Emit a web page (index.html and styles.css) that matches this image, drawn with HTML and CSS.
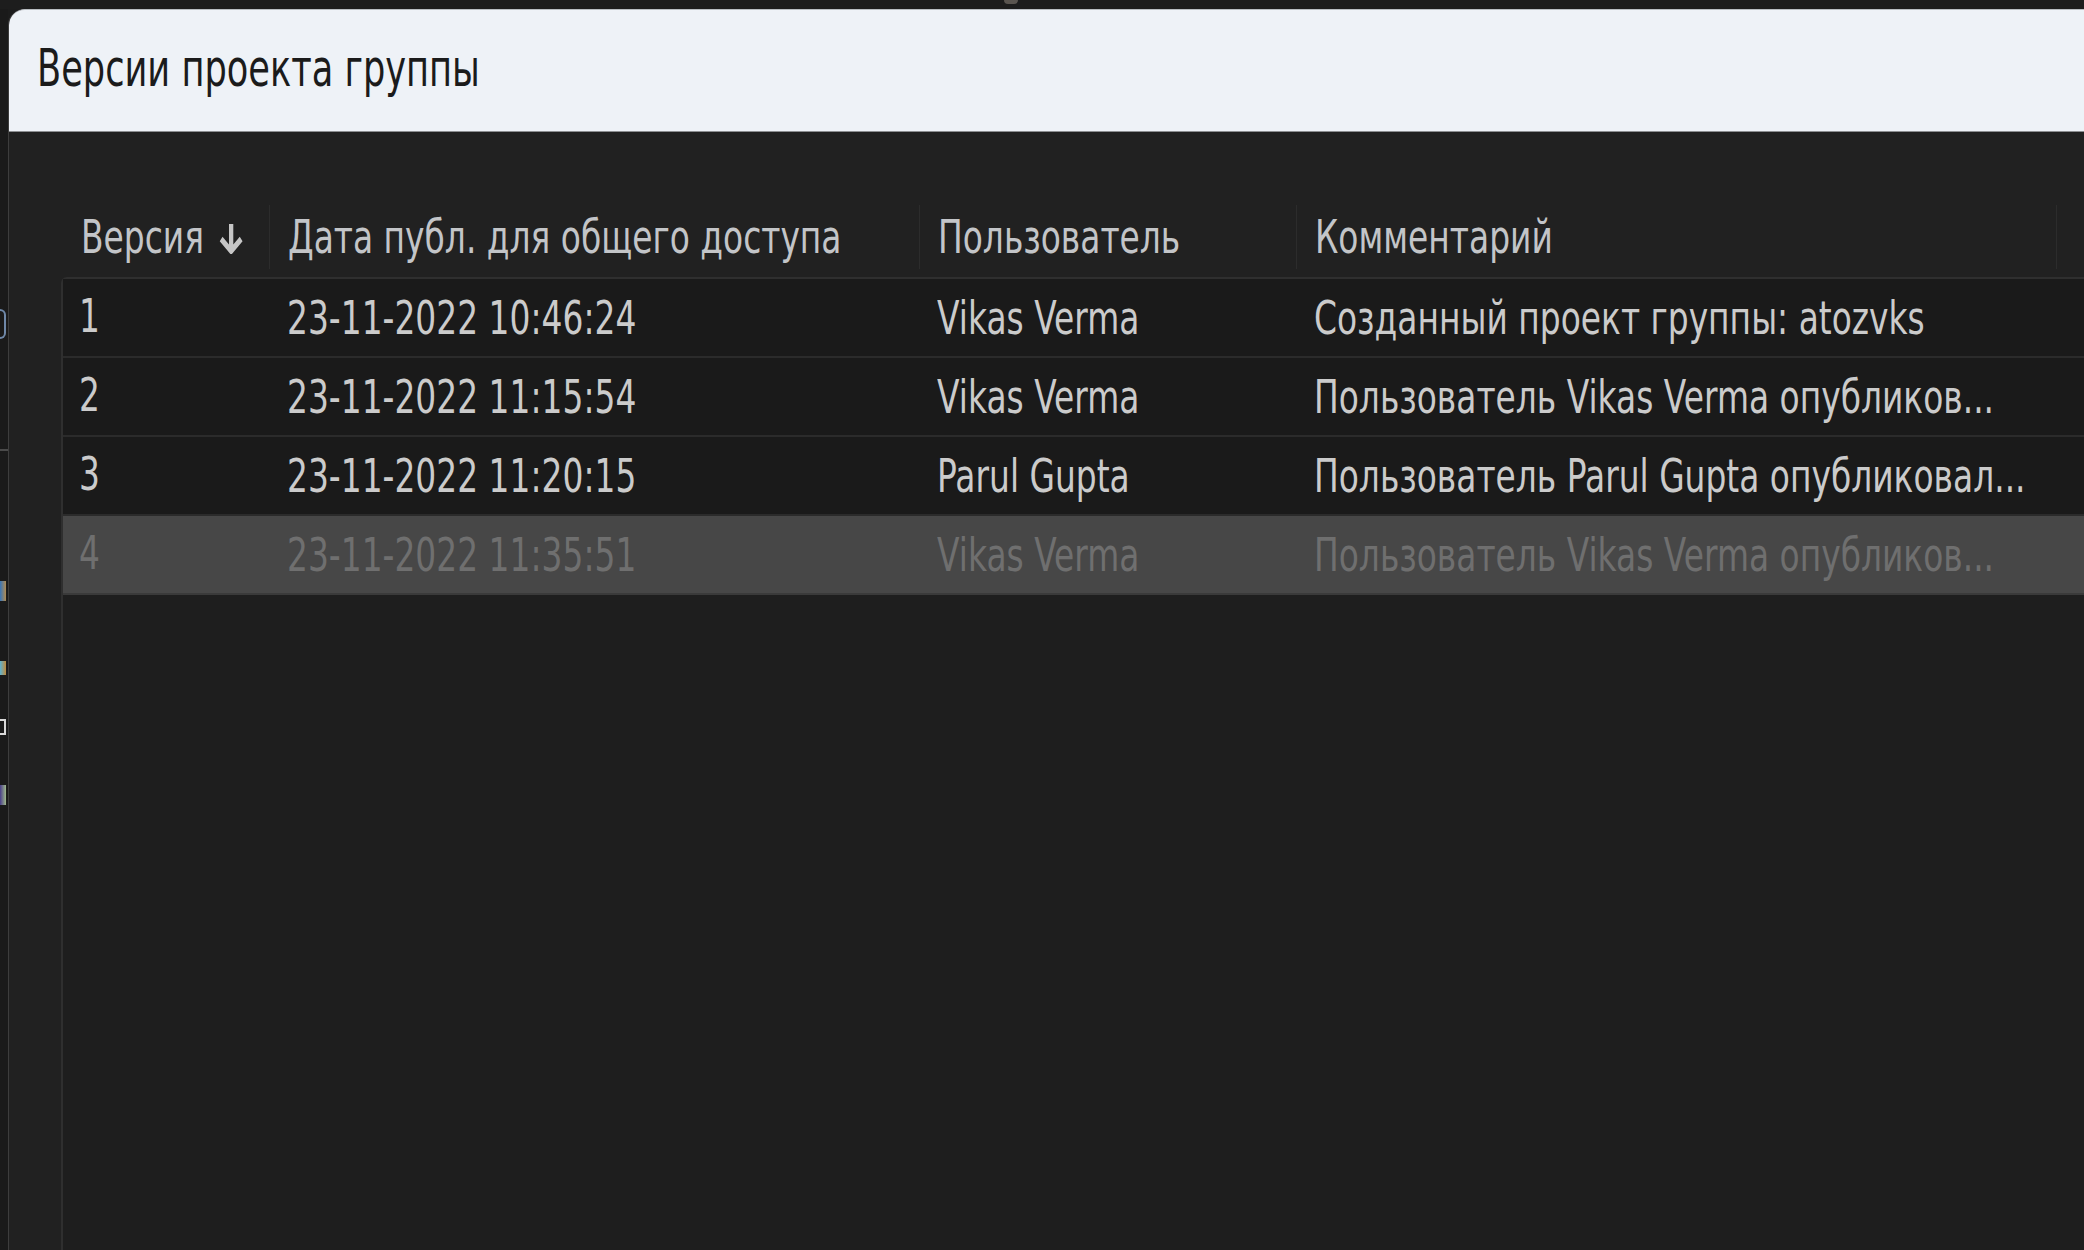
FILE: index.html
```html
<!DOCTYPE html>
<html lang="ru">
<head>
    <meta charset="UTF-8">
    <meta name="viewport" content="width=device-width, initial-scale=1.0">
    <title>Версии проекта группы</title>
    <link rel="stylesheet" href="styles.css">
</head>
<body>
    <div class="topstrip"><span class="blip"></span></div>
    <div class="desktop">
        <div class="backdrop">
            <span class="bit ring"></span>
            <span class="bit line"></span>
            <span class="bit blue"></span>
            <span class="bit orange"></span>
            <span class="bit white"></span>
            <span class="bit green"></span>
        </div>
        <div class="dialog">
            <div class="titlebar">
                <span class="title">Версии проекта группы</span>
            </div>
            <div class="content">
                <div class="head">
                    <div class="hcell first"><span class="t">Версия<svg class="sort" viewBox="0 0 36 32" width="36" height="32"><path d="M18 2 V28 M4 17 L18 29 L32 17" fill="none" stroke="#c6c6c6" stroke-width="6"/></svg></span></div>
                    <div class="hcell"><span class="t">Дата публ. для общего доступа</span></div>
                    <div class="hcell"><span class="t">Пользователь</span></div>
                    <div class="hcell"><span class="t">Комментарий</span></div>
                    <div class="hcell"></div>
                </div>
                <div class="grid">
                    <div class="row">
                        <div class="cell first"><span class="t">1</span></div>
                        <div class="cell"><span class="t">23-11-2022 10:46:24</span></div>
                        <div class="cell"><span class="t">Vikas Verma</span></div>
                        <div class="cell"><span class="t">Созданный проект группы: atozvks</span></div>
                        <div class="cell"></div>
                    </div>
                    <div class="row">
                        <div class="cell first"><span class="t">2</span></div>
                        <div class="cell"><span class="t">23-11-2022 11:15:54</span></div>
                        <div class="cell"><span class="t">Vikas Verma</span></div>
                        <div class="cell"><span class="t">Пользователь Vikas Verma опубликов...</span></div>
                        <div class="cell"></div>
                    </div>
                    <div class="row">
                        <div class="cell first"><span class="t">3</span></div>
                        <div class="cell"><span class="t">23-11-2022 11:20:15</span></div>
                        <div class="cell"><span class="t">Parul Gupta</span></div>
                        <div class="cell"><span class="t">Пользователь Parul Gupta опубликовал...</span></div>
                        <div class="cell"></div>
                    </div>
                    <div class="row selected">
                        <div class="cell first"><span class="t">4</span></div>
                        <div class="cell"><span class="t">23-11-2022 11:35:51</span></div>
                        <div class="cell"><span class="t">Vikas Verma</span></div>
                        <div class="cell"><span class="t">Пользователь Vikas Verma опубликов...</span></div>
                        <div class="cell"></div>
                    </div>
                </div>
            </div>
        </div>
    </div>
</body>
</html>
```

FILE: styles.css
```css
* {
    margin: 0;
    padding: 0;
    box-sizing: border-box;
}
body {
    width: 2084px;
    height: 1250px;
    overflow: hidden;
    background-color: #1c1c1c;
    font-family: "DejaVu Sans", sans-serif;
}
.topstrip {
    height: 9px;
    background-color: #1d1d1d;
    padding-left: 1004px;
}
.blip {
    display: block;
    width: 14px;
    height: 4px;
    border-radius: 0 0 6px 6px;
    background-color: #5a5550;
}
.desktop {
    display: flex;
    height: 1241px;
}
.backdrop {
    width: 8px;
    background-color: #1a1a1a;
    display: flex;
    flex-direction: column;
    padding-top: 300px;
}
.bit {
    display: block;
    width: 6px;
}
.ring {
    height: 30px;
    border: 2px solid #6f88a8;
    border-left: none;
    border-radius: 0 15px 15px 0;
}
.line {
    height: 2px;
    width: 8px;
    margin-top: 110px;
    background-color: #4a4a4a;
}
.blue {
    height: 20px;
    margin-top: 130px;
    background: linear-gradient(90deg, #3a76b8, #b08a50);
}
.orange {
    height: 14px;
    margin-top: 60px;
    background: linear-gradient(90deg, #5fb3d0, #c08a3a);
}
.white {
    height: 16px;
    margin-top: 44px;
    border: 2px solid #d8d8d8;
    border-left: none;
}
.green {
    height: 20px;
    margin-top: 50px;
    background: linear-gradient(90deg, #4a3f8a, #9fb88a);
}
.dialog {
    flex: 1;
    display: flex;
    flex-direction: column;
    background-color: #212121;
    border-left: 1px solid #3d3d3d;
    border-top-left-radius: 16px;
    overflow: hidden;
}
.titlebar {
    height: 123px;
    display: flex;
    align-items: center;
    padding-left: 28px;
    padding-bottom: 4px;
    background-color: #eef2f7;
    border-top: 1px solid #b9bdc2;
    border-bottom: 1px solid #8d8f92;
    border-top-left-radius: 16px;
}
/* the source screenshot is squeezed sideways, so text is narrowed to match */
.title {
    display: inline-block;
    font-size: 51px;
    color: #1b1b1b;
    white-space: nowrap;
    transform: scaleX(0.69);
    transform-origin: left center;
}
.t {
    display: inline-flex;
    align-items: center;
    white-space: nowrap;
    transform: scaleX(0.715);
    transform-origin: left center;
}
.content {
    flex: 1;
    padding-top: 64px;
    padding-left: 52px;
    font-size: 46px;
}
.head {
    display: grid;
    grid-template-columns: 208px 650px 377px 760px 1fr;
    height: 81px;
    align-items: center;
    color: #c3c5c8;
}
.hcell {
    height: 64px;
    display: flex;
    align-items: center;
    padding-left: 18px;
    border-left: 1px solid #2c2c2c;
    white-space: nowrap;
}
.hcell.first {
    border-left: none;
    padding-left: 20px;
}
.sort {
    flex-shrink: 0;
    margin-left: 20px;
    margin-top: 2px;
}
.grid {
    height: 100%;
    background-color: #1e1e1e;
    border-left: 2px solid #2f2f2f;
    border-top: 2px solid #2f2f2f;
    border-top-left-radius: 6px;
}
.row {
    display: grid;
    grid-template-columns: 206px 650px 377px 760px 1fr;
    height: 79px;
    align-items: center;
    background-color: #1a1a1a;
    border-bottom: 2px solid #2b2b2b;
    color: #cbcbcb;
}
.row.selected {
    background-color: #474747;
    border-bottom-color: #3a3a3a;
    color: #6f6f6f;
}
.cell {
    padding-left: 18px;
    white-space: nowrap;
}
.cell.first {
    padding-left: 16px;
    padding-bottom: 4px;
}
```
